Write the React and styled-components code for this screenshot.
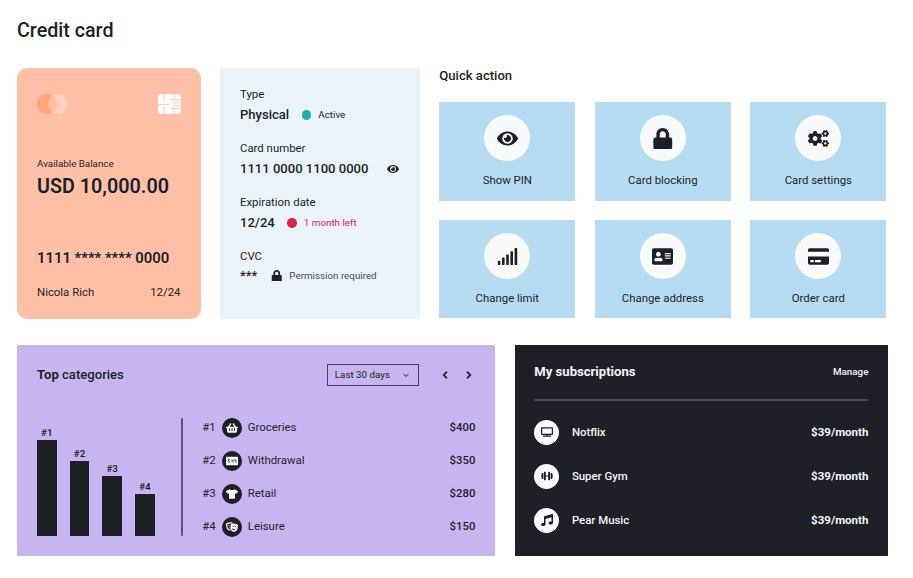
import React from 'react';
import styled, { createGlobalStyle } from 'styled-components';
import {
  FaEye, FaLock, FaCogs, FaSignal, FaAddressCard, FaCreditCard, FaShoppingBasket,
  FaMoneyCheckAlt, FaTshirt, FaTheaterMasks, FaDumbbell, FaMusic, FaTv,
  FaChevronLeft, FaChevronRight,
} from 'react-icons/fa';

const ink = '#1f1f27';

const GlobalStyle = createGlobalStyle`
  * { box-sizing: border-box; }
  body {
    margin: 0;
    background: #fff;
    color: ${ink};
    font-family: Roboto, "Liberation Sans", sans-serif;
    font-size: 11.4px;
    line-height: 20px;
  }
  h1, h2, p, ul, dl, dd { margin: 0; padding: 0; }
  svg { display: block; flex: none; }
`;

const Page = styled.main`
  width: 913px;
  height: 578px;
  padding: 19px 0 0 17px;
  overflow: hidden;
`;
const Title = styled.h1`
  font-size: 19.7px;
  font-weight: 500;
  line-height: 24px;
`;
const TopRow = styled.section`
  display: flex;
  height: 250.5px;
  margin-top: 25px;
`;
const BottomRow = styled.section`
  display: flex;
  gap: 19.7px;
  height: 211px;
  margin-top: 26.3px;
`;

const Card = styled.article`
  display: flex;
  flex-direction: column;
  width: 183.5px;
  padding: 26px 20px 0;
  border-radius: 10px;
  background: #ffc0a7;
`;
const CardLogos = styled.div`
  display: flex;
  justify-content: space-between;
  height: 20px;
`;
const BalanceLabel = styled.p`
  margin-top: 39.5px;
  font-size: 9.8px;
`;
const Balance = styled.p`
  margin-top: 1px;
  font-size: 19.75px;
  font-weight: 600;
  line-height: 24px;
`;
const CardDigits = styled.p`
  margin-top: 49.5px;
  font-size: 14.85px;
  font-weight: 600;
`;
const CardFooter = styled.div`
  display: flex;
  justify-content: space-between;
  margin-top: 14px;
`;

const Details = styled.dl`
  display: flex;
  flex-direction: column;
  gap: 14px;
  width: 200px;
  margin-left: 19.5px;
  padding: 16px 20px 0;
  background: #eaf2fa;
`;
const DetailValue = styled.dd`
  display: flex;
  align-items: center;
  height: ${(p) => (p.$masked ? 19 : 22)}px;
  margin-bottom: ${(p) => (p.$masked ? 0 : -2)}px;
  font-size: 13.05px;
  font-weight: 500;
`;
const Dot = styled.span`
  width: 9.6px;
  height: 9.6px;
  margin: 0 7px 0 12.5px;
  border-radius: 50%;
  background: ${(p) => p.$color};
`;
const Note = styled.span`
  color: ${(p) => p.$color || ink};
  font-size: 9.8px;
  font-weight: 400;
`;
const RevealIcon = styled(FaEye)`
  margin-left: 18.5px;
  font-size: 12px;
`;
const PermissionIcon = styled(FaLock)`
  margin: 0 6.5px 0 14px;
  font-size: 11.5px;
`;

const Quick = styled.div`
  width: 447px;
  margin-left: 19.3px;
`;
const SectionTitle = styled.h2`
  font-size: 13.1px;
  font-weight: ${(p) => p.$weight || 500};
  line-height: 20px;
`;
const QuickTitle = styled(SectionTitle)`
  margin-top: -2px;
`;
const Tiles = styled.div`
  display: grid;
  grid-template-columns: repeat(3, 1fr);
  gap: 19.5px;
  margin-top: 16.4px;
`;
const Tile = styled.div`
  display: flex;
  flex-direction: column;
  align-items: center;
  height: 98.3px;
  padding-top: 13px;
  background: #b6dcf3;
`;
const TileIcon = styled.span`
  display: flex;
  align-items: center;
  justify-content: center;
  width: 46px;
  height: 46px;
  margin-bottom: 9px;
  border-radius: 50%;
  background: #f9fafc;
  font-size: ${(p) => p.$size}px;
`;

const Categories = styled.article`
  width: 478px;
  padding: 19.3px 19.6px 0 20px;
  background: #c7b5f2;
`;
const CategoriesHead = styled.header`
  display: flex;
  align-items: center;
  height: 22px;
`;
const Period = styled.div`
  display: flex;
  align-items: center;
  justify-content: space-between;
  width: 92px;
  height: 22px;
  margin-left: auto;
  padding: 0 8px 1px 6.4px;
  border: 1px solid #47435a;
  font-size: 9.8px;
`;
const Pager = styled.div`
  display: flex;
  gap: 16px;
  margin: 0 2px 0 22px;
  font-size: 8px;

  path {
    stroke: ${ink};
    stroke-width: 48px;
  }
`;
const CategoriesBody = styled.div`
  display: flex;
  margin-top: 32px;
  height: 118px;
`;
const Chart = styled.div`
  display: flex;
  align-items: flex-end;
  gap: 13px;
  width: 144px;
`;
const Column = styled.div`
  display: flex;
  flex-direction: column;
  align-items: center;
  width: 19.7px;
  font-size: 9.8px;
  font-weight: 600;
  line-height: 14px;
`;
const Bar = styled.div`
  width: 100%;
  background: ${ink};
`;
const ChartRule = styled.div`
  width: 2px;
  border-radius: 1px;
  background: #5c5570;
`;
const CategoryList = styled.ul`
  flex: 1;
  margin-left: 19.3px;
  list-style: none;
`;
const CategoryRow = styled.li`
  display: flex;
  align-items: center;
  height: 20px;
  margin-bottom: 13px;
`;
const Rank = styled.span`
  width: 19.4px;
  margin-top: -2px;
`;
const CategoryIcon = styled.span`
  display: flex;
  align-items: center;
  justify-content: center;
  width: 20px;
  height: 20px;
  margin-right: 6.1px;
  border-radius: 50%;
  background: ${ink};
  color: #f9fafc;
  font-size: 12px;
`;
const CategoryName = styled.span`
  margin-top: -2px;
`;
const Amount = styled.span`
  margin: -2px 0 0 auto;
  font-weight: 500;
`;

const Subscriptions = styled.article`
  width: 373.3px;
  padding: 17px 19.6px 0;
  background: ${ink};
  color: #f4f4f7;
`;
const SubscriptionsHead = styled.header`
  display: flex;
  align-items: center;
  justify-content: space-between;
  height: 39px;
  padding: 1px 0 17px;
  border-bottom: 2px solid #4b4b54;
`;
const Manage = styled.span`
  font-size: 9.8px;
  font-weight: 500;
`;
const SubscriptionRow = styled.div`
  display: flex;
  align-items: center;
  height: 25px;
  margin-top: 19px;
  font-weight: 500;
`;
const SubscriptionIcon = styled.span`
  display: flex;
  align-items: center;
  justify-content: center;
  width: 25px;
  height: 25px;
  margin-right: 12.6px;
  border-radius: 50%;
  background: #f9fafc;
  color: ${ink};
  font-size: 12px;
`;
const Price = styled.span`
  margin-left: auto;
  font-size: 11.5px;
  font-weight: 700;
`;

function BrandMark() {
  return (
    <svg width="31" height="20" viewBox="0 0 31 20">
      <circle cx="10" cy="10" r="10" fill="#ffa37d" />
      <circle cx="21" cy="10" r="10" fill="#fff" fillOpacity=".27" />
    </svg>
  );
}

function Chip() {
  return (
    <svg width="24" height="20" viewBox="0 0 24 20">
      <rect x="1" width="23" height="20" rx="3" fill="#f9fafc" />
      <g fill="none" stroke="#ffc9b4" strokeWidth=".9">
        <path d="M7.2 0v5.5M7.2 14.2V20M17 0v5.5M17 14.2V20M1 10.5h11M13 5.8H24M13 14.4H24" />
        <path d="M16 8.8h8M16 11.6h8" strokeWidth=".8" />
        <path d="M5.7 5.5h2M5.7 14.2h2" />
      </g>
    </svg>
  );
}

function Caret() {
  return (
    <svg width="8" height="8" viewBox="0 0 8 8" fill="none" stroke={ink} strokeWidth="1">
      <path d="M1.5 3l2.5 2.4L6.5 3" />
    </svg>
  );
}

const actions = [
  { label: 'Show PIN', Icon: FaEye, size: 21 },
  { label: 'Card blocking', Icon: FaLock, size: 21.5 },
  { label: 'Card settings', Icon: FaCogs, size: 21 },
  { label: 'Change limit', Icon: FaSignal, size: 21 },
  { label: 'Change address', Icon: FaAddressCard, size: 21 },
  { label: 'Order card', Icon: FaCreditCard, size: 21 },
];
const categories = [
  { label: 'Groceries', amount: '$400', Icon: FaShoppingBasket, bar: 96.5 },
  { label: 'Withdrawal', amount: '$350', Icon: FaMoneyCheckAlt, bar: 75 },
  { label: 'Retail', amount: '$280', Icon: FaTshirt, bar: 60.5 },
  { label: 'Leisure', amount: '$150', Icon: FaTheaterMasks, bar: 42.5 },
];
const subscriptions = [
  { label: 'Notflix', Icon: FaTv },
  { label: 'Super Gym', Icon: FaDumbbell },
  { label: 'Pear Music', Icon: FaMusic },
];

export default function App() {
  return (
    <Page>
      <GlobalStyle />
      <Title>Credit card</Title>
      <TopRow>
        <Card>
          <CardLogos><BrandMark /><Chip /></CardLogos>
          <BalanceLabel>Available Balance</BalanceLabel>
          <Balance>USD 10,000.00</Balance>
          <CardDigits>1111 **** **** 0000</CardDigits>
          <CardFooter><span>Nicola Rich</span><span>12/24</span></CardFooter>
        </Card>
        <Details>
          <div>
            <dt>Type</dt>
            <DetailValue>Physical<Dot $color="#20b2aa" /><Note>Active</Note></DetailValue>
          </div>
          <div>
            <dt>Card number</dt>
            <DetailValue>1111 0000 1100 0000<RevealIcon /></DetailValue>
          </div>
          <div>
            <dt>Expiration date</dt>
            <DetailValue>12/24<Dot $color="#dc2350" /><Note $color="#dc2350">1 month left</Note></DetailValue>
          </div>
          <div>
            <dt>CVC</dt>
            <DetailValue $masked>***<PermissionIcon /><Note $color="#4c4c54">Permission required</Note></DetailValue>
          </div>
        </Details>
        <Quick>
          <QuickTitle>Quick action</QuickTitle>
          <Tiles>
            {actions.map(({ label, Icon, size }) => (
              <Tile key={label}>
                <TileIcon $size={size}><Icon /></TileIcon>
                {label}
              </Tile>
            ))}
          </Tiles>
        </Quick>
      </TopRow>
      <BottomRow>
        <Categories>
          <CategoriesHead>
            <SectionTitle><b>Top</b> categories</SectionTitle>
            <Period>Last 30 days<Caret /></Period>
            <Pager><FaChevronLeft /><FaChevronRight /></Pager>
          </CategoriesHead>
          <CategoriesBody>
            <Chart>
              {categories.map(({ label, bar }, i) => (
                <Column key={label}>
                  #{i + 1}
                  <Bar style={{ height: bar }} />
                </Column>
              ))}
            </Chart>
            <ChartRule />
            <CategoryList>
              {categories.map(({ label, amount, Icon }, i) => (
                <CategoryRow key={label}>
                  <Rank>#{i + 1}</Rank>
                  <CategoryIcon><Icon /></CategoryIcon>
                  <CategoryName>{label}</CategoryName>
                  <Amount>{amount}</Amount>
                </CategoryRow>
              ))}
            </CategoryList>
          </CategoriesBody>
        </Categories>
        <Subscriptions>
          <SubscriptionsHead>
            <SectionTitle $weight={700}>My subscriptions</SectionTitle>
            <Manage>Manage</Manage>
          </SubscriptionsHead>
          {subscriptions.map(({ label, Icon }) => (
            <SubscriptionRow key={label}>
              <SubscriptionIcon><Icon /></SubscriptionIcon>
              {label}
              <Price>$39/month</Price>
            </SubscriptionRow>
          ))}
        </Subscriptions>
      </BottomRow>
    </Page>
  );
}
